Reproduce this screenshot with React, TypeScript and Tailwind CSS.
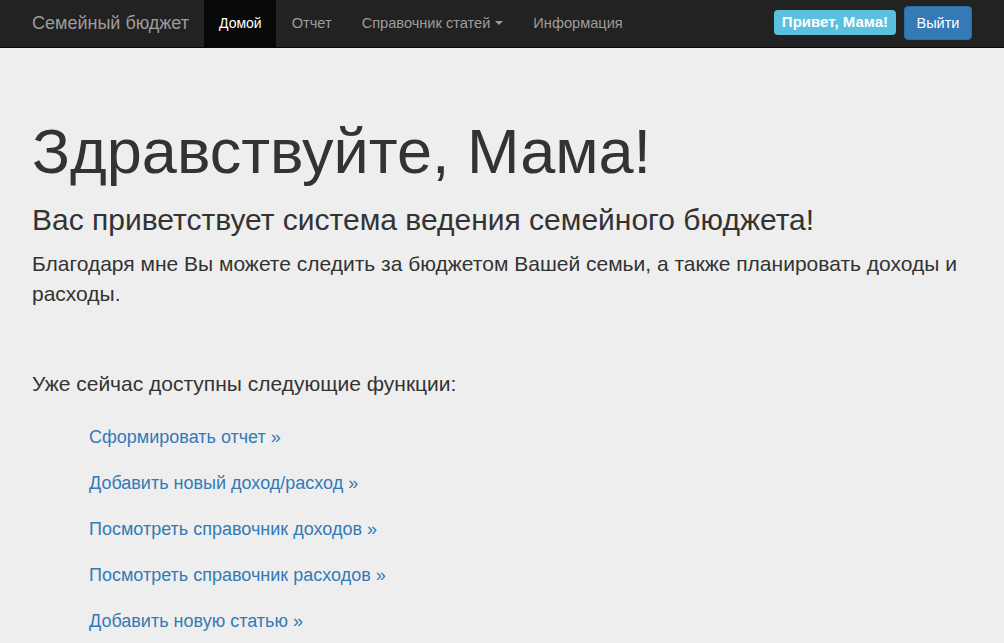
import React from "react";

const font = { fontFamily: '"Liberation Sans", Arial, Helvetica, sans-serif' };

export default function App() {
  const links = [
    "Сформировать отчет »",
    "Добавить новый доход/расход »",
    "Посмотреть справочник доходов »",
    "Посмотреть справочник расходов »",
    "Добавить новую статью »",
  ];
  return (
    <div className="min-h-[643px] bg-[#eeeeee] text-[#333333]" style={font}>
      <nav className="h-[48px] bg-[#222222] border-b border-[#080808]">
        <div className="w-[970px] mx-auto flex h-[47px]">
          <a className="px-[15px] pt-[13px] text-[18px] leading-[20px] text-[#9d9d9d]">Семейный бюджет</a>
          <ul className="flex h-full text-[14px] leading-[20px]">
            <li className="h-full bg-[#080808] text-white pl-[15px] pr-[14px] pt-[13px]">Домой</li>
            <li className="h-full text-[#9d9d9d] pl-[16px] pr-[15px] pt-[13px] text-[14.6px]">Отчет</li>
            <li className="h-full text-[#9d9d9d] px-[15px] pt-[13px] flex items-start text-[14.6px]">
              <span>Справочник статей</span>
              <span className="ml-[5px] mt-[8px] w-0 h-0 border-t-[4px] border-t-[#9d9d9d] border-x-[4px] border-x-transparent" />
            </li>
            <li className="h-full text-[#9d9d9d] px-[15px] pt-[13px] text-[14.6px]">Информация</li>
          </ul>
          <div className="ml-auto flex items-start pr-[15px]">
            <span className="mt-[10px] h-[25px] px-[8px] flex items-center rounded-[4px] bg-[#5bc0de] text-white font-bold text-[15px]">
              Привет, Мама!
            </span>
            <button className="ml-[8px] mt-[6px] h-[34px] w-[68px] rounded-[4px] bg-[#337ab7] border border-[#2e6da4] text-white text-[14.5px] leading-[20px]">
              Выйти
            </button>
          </div>
        </div>
      </nav>
      <main className="w-[970px] mx-auto px-[15px] pt-[69px]">
        <h1 className="text-[63px] leading-[69px]">Здравствуйте, Мама!</h1>
        <h2 className="mt-[17px] text-[30px] leading-[33px]">Вас приветствует система ведения семейного бюджета!</h2>
        <p className="mt-[13px] text-[21px] leading-[30px]">
          Благодаря мне Вы можете следить за бюджетом Вашей семьи, а также планировать доходы и расходы.
        </p>
        <p className="mt-[60px] text-[21px] leading-[30px]">Уже сейчас доступны следующие функции:</p>
        <ul className="mt-[15px] ml-[57px] flex flex-col">
          {links.map((l) => (
            <li key={l} className="text-[18px] leading-[46px] text-[#337ab7]">
              <a>{l}</a>
            </li>
          ))}
        </ul>
      </main>
    </div>
  );
}
